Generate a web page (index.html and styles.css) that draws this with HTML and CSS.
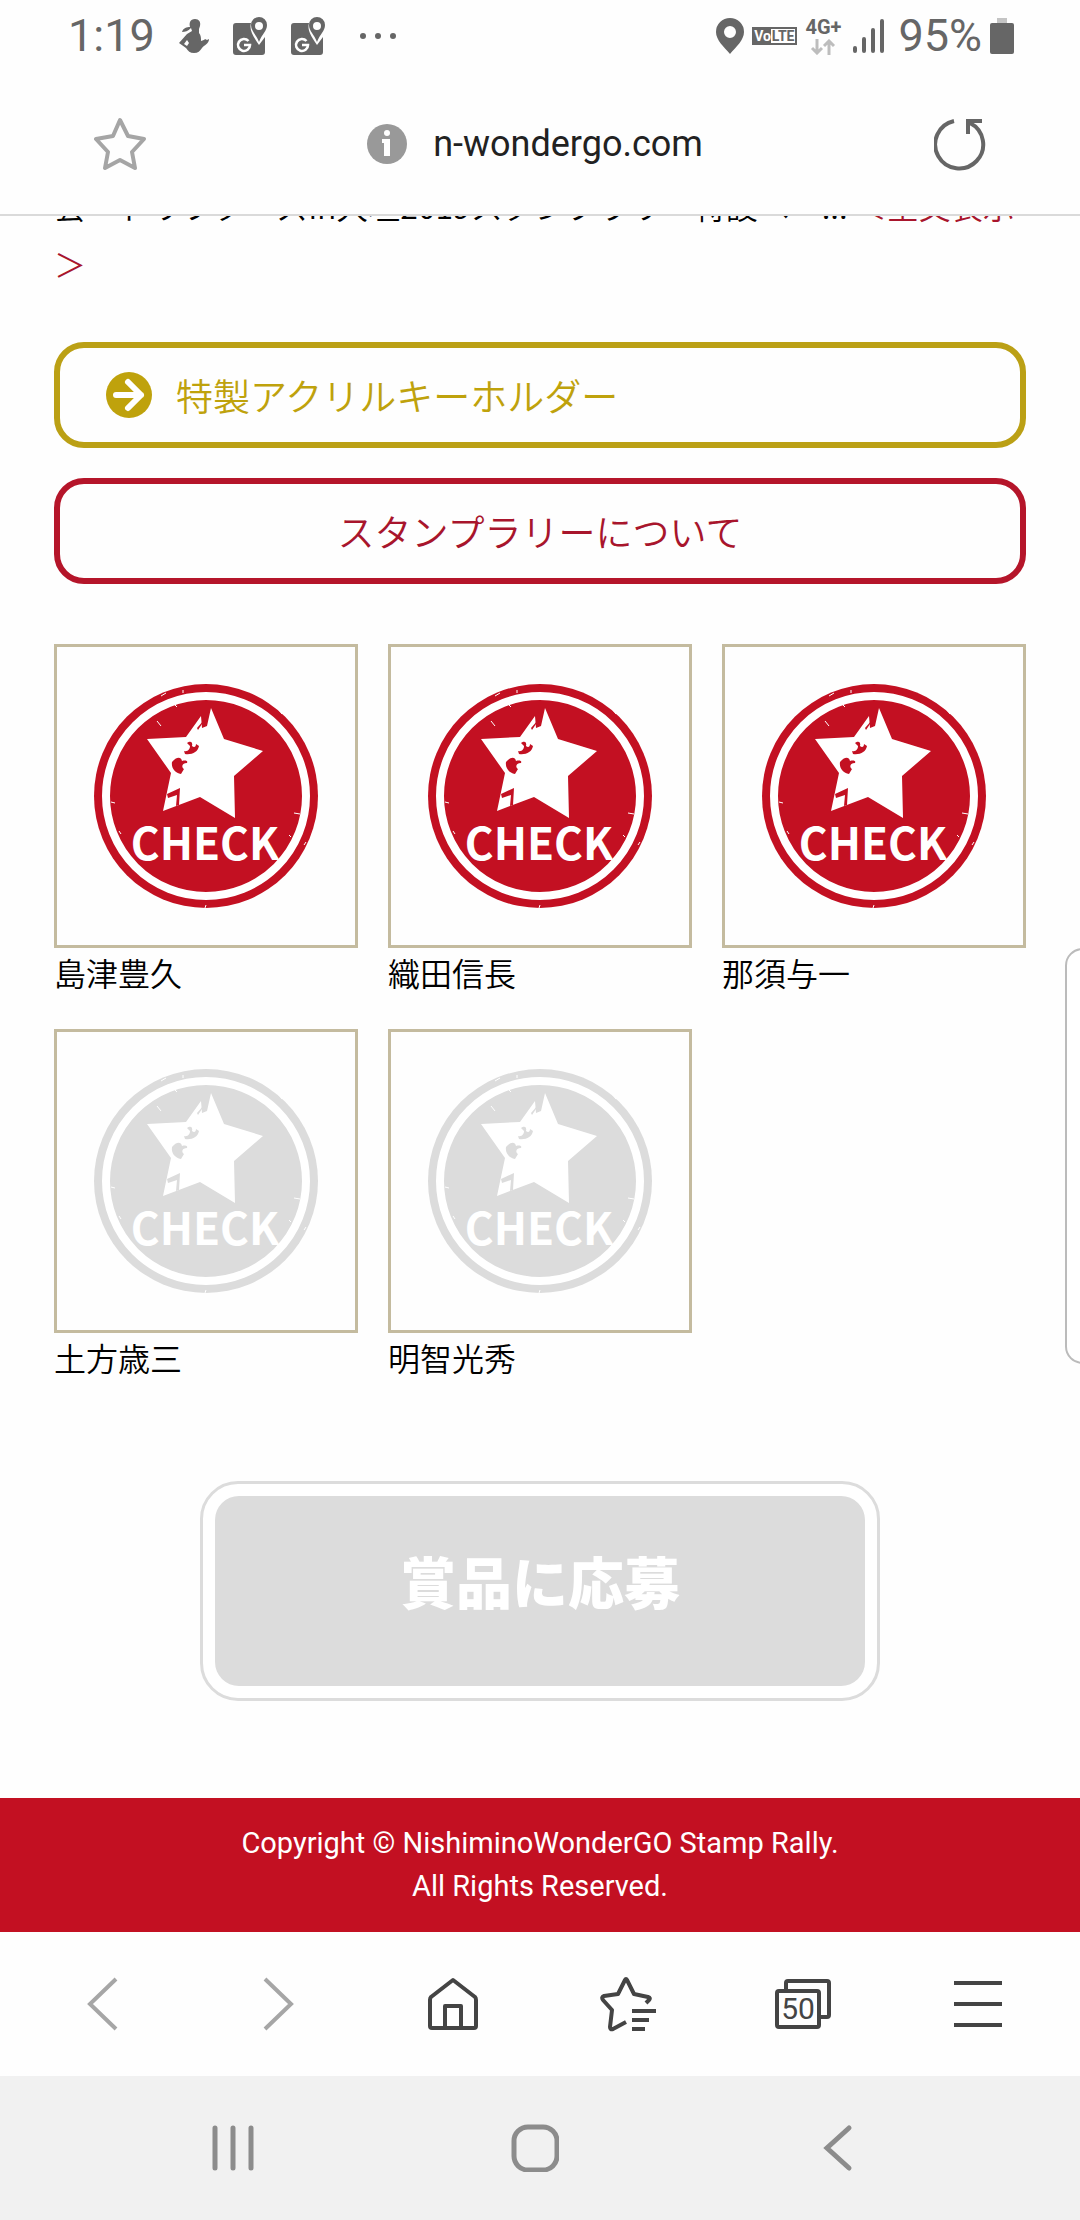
FILE: index.html
```html
<!DOCTYPE html>
<html lang="ja">
<head>
    <meta charset="UTF-8">
    <meta name="viewport" content="width=device-width, initial-scale=1.0">
    <title>スタンプラリー</title>
    <link rel="stylesheet" href="styles.css">
</head>
<body>
    <!-- shared drawings -->
    <svg class="defs" aria-hidden="true">
        <symbol id="icon-gmap" viewBox="0 0 34 38">
            <path fill="currentColor" d="M3 6h15c-2 7 2 13 8 22l6-8v15a3 3 0 0 1-3 3H3a3 3 0 0 1-3-3V9a3 3 0 0 1 3-3z"/>
            <path fill="currentColor" fill-rule="evenodd" d="M26 0a8 8 0 0 1 8 8c0 6-5 9-8 17-3-8-8-11-8-17a8 8 0 0 1 8-8zm0 5a4 4 0 1 0 0 8 4 4 0 0 0 0-8z"/>
            <path fill="none" stroke="#fff" stroke-width="2.6" d="M15.500 24a6 6 0 1 0 1.500 4h-6"/>
        </symbol>
        <symbol id="stamp" viewBox="3 3 298 298">
            <circle cx="152" cy="152" r="112" fill="currentColor"/>
            <circle cx="152" cy="152" r="100" fill="none" stroke="#fff" stroke-width="8"/>
            <path fill="#fff" d="M157 64l13 31 39 12-29 25 1 42-35-21-37 14 8-38-24-34 39-2 15-21 1 12 5-2z"/>
            <g fill="currentColor">
                <path d="M118 118c4-5 9-6 10-1 4-1 6 0 5 2-5 0-6 4-3 6l-3 5c-6-1-10-6-9-12z"/>
                <path d="M133 99c4-3 6 0 5 3 2 2 4 1 4-2l3 2c-1 6-7 9-14 8l-1-3c4 1 6-2 6-5z"/>
                <path d="M113 150l13-6-1 17-3 1 1-11-9 3z"/>
                <path d="M143 84l7-8 1 7-3-3-4 6z"/>
            </g>
            <text class="stamp-text" x="151" y="216" text-anchor="middle" fill="#fff">CHECK</text>
            <!-- scratches in the ink -->
            <path fill="none" stroke="#fff" stroke-width="1" d="M107 52l5-3M129 46v3M103 77l4 5M60 87l2-3M225 66l3 4M57 158l4 1M240 169l6 1M65 187l2 3M250 201l2-3M235 191l2 2M151 264l1-3M121 61l2 2"/>
        </symbol>
    </svg>

    <header class="top">
        <div class="status">
            <div class="status-left">
                <span class="clock">1:19</span>
                <svg width="30" height="34" viewBox="0 0 30 34" fill="currentColor">
                    <path fill-rule="evenodd" d="M16 0c4 0 6 3 5 7l-1 3v4c2 2 2 5 2 8 2-1 4-1 4-2l2 1 2-1c0 5-5 6-7 9-2 3-4 5-8 5-4 0-6-2-8-5l-7-5 8-9 5-3-1-3c-3 3-6 4-9 4 1-4 5-5 8-5-1-4 0-8 5-8zM8 21l-3 4 3 2 2-3z"/>
                </svg>
                <svg width="34" height="38"><use href="#icon-gmap"/></svg>
                <svg width="34" height="38"><use href="#icon-gmap"/></svg>
                <svg class="more" width="38" height="8" viewBox="0 0 38 8" fill="currentColor">
                    <circle cx="4" cy="4" r="3"/><circle cx="19" cy="4" r="3"/><circle cx="34" cy="4" r="3"/>
                </svg>
            </div>
            <div class="status-right">
                <svg width="28" height="36" viewBox="0 0 28 36">
                    <path fill="currentColor" fill-rule="evenodd" d="M14 0a14 14 0 0 1 14 14c0 8-8 15-14 22C8 29 0 22 0 14A14 14 0 0 1 14 0zm0 8a6 6 0 1 0 0 12 6 6 0 0 0 0-12z"/>
                </svg>
                <span class="volte"><b>Vo</b><b class="lte">LTE</b></span>
                <span class="network">4G+
                    <svg width="26" height="16" viewBox="0 0 26 16" fill="none" stroke="#bdbdbd" stroke-width="3">
                        <path d="M7 0v14M2 9l5 5 5-5M19 16V2M14 7l5-5 5 5"/>
                    </svg>
                </span>
                <svg class="signal" width="31" height="34" viewBox="0 0 31 34" stroke="currentColor" stroke-width="4" stroke-linecap="round">
                    <path d="M2 29v3M11 20v12M20 11v21M29 2v30"/>
                </svg>
                <span class="clock">95%</span>
                <svg width="24" height="36" viewBox="0 0 24 36">
                    <path fill="#c4c4c4" d="M7 0h10v6H7z"/>
                    <rect y="5" width="24" height="31" rx="2" fill="currentColor"/>
                </svg>
            </div>
        </div>
        <div class="address">
            <button class="icon-btn light" aria-label="ブックマーク">
                <svg width="52" height="54" viewBox="0 0 52 54" fill="none" stroke="currentColor" stroke-width="4" stroke-linejoin="round">
                    <path d="M26 3l8 16 16 3-12 13 3 16-15-8-15 8 3-16L2 22l17-3z"/>
                </svg>
            </button>
            <div class="url">
                <svg width="40" height="40" viewBox="0 0 40 40">
                    <circle cx="20" cy="20" r="20" fill="#999"/>
                    <path fill="#fff" d="M15 15h8v17h-6V19h-2z"/>
                    <circle cx="20" cy="9" r="3" fill="#fff"/>
                </svg>
                <span>n-wondergo.com</span>
            </div>
            <button class="icon-btn" aria-label="再読み込み">
                <svg width="52" height="54" viewBox="0 0 52 54" fill="none" stroke="currentColor" stroke-width="4">
                    <path d="M20 4A24 24 0 1 0 36 6M34 17V4h14"/>
                </svg>
            </button>
        </div>
    </header>

    <main class="page">
        <p class="intro">会「ドリフターズin大垣2019スタンプラリー特設ペー... <a href="#">＜全文表示<br>＞</a></p>

        <a class="link-box gold" href="#">
            <svg width="46" height="46" viewBox="0 0 46 46">
                <circle cx="23" cy="23" r="23" fill="currentColor"/>
                <path fill="none" stroke="#fff" stroke-width="6" stroke-linecap="round" stroke-linejoin="round" d="M10 23h25M22 10l13 13-13 13"/>
            </svg>
            特製アクリルキーホルダー
        </a>
        <a class="link-box red" href="#">スタンプラリーについて</a>

        <div class="stamps">
            <figure class="stamp done">
                <svg class="stamp-img"><use href="#stamp"/></svg>
                <figcaption>島津豊久</figcaption>
            </figure>
            <figure class="stamp done">
                <svg class="stamp-img"><use href="#stamp"/></svg>
                <figcaption>織田信長</figcaption>
            </figure>
            <figure class="stamp done">
                <svg class="stamp-img"><use href="#stamp"/></svg>
                <figcaption>那須与一</figcaption>
            </figure>
            <figure class="stamp">
                <svg class="stamp-img"><use href="#stamp"/></svg>
                <figcaption>土方歳三</figcaption>
            </figure>
            <figure class="stamp">
                <svg class="stamp-img"><use href="#stamp"/></svg>
                <figcaption>明智光秀</figcaption>
            </figure>
        </div>

        <button class="apply-btn" disabled><span>賞品に応募</span></button>
    </main>

    <footer class="copyright">
        Copyright © NishiminoWonderGO Stamp Rally.<br>
        All Rights Reserved.
    </footer>

    <nav class="toolbar">
        <button class="icon-btn pale" aria-label="戻る">
            <svg width="52" height="54" viewBox="0 0 52 54" fill="none" stroke="currentColor" stroke-width="4">
                <path d="M39 2L13 27l26 25"/>
            </svg>
        </button>
        <button class="icon-btn pale" aria-label="進む">
            <svg width="52" height="54" viewBox="0 0 52 54" fill="none" stroke="currentColor" stroke-width="4">
                <path d="M13 2l26 25-26 25"/>
            </svg>
        </button>
        <button class="icon-btn dark" aria-label="ホーム">
            <svg width="52" height="54" viewBox="0 0 52 54" fill="none" stroke="currentColor" stroke-width="4" stroke-linejoin="round">
                <path d="M26 3l22 17q1 1 1 3v26q0 2-2 2H5q-2 0-2-2V23q0-2 1-3zM18 51V29h16v22"/>
            </svg>
        </button>
        <button class="icon-btn dark" aria-label="ブックマーク一覧">
            <svg width="56" height="56" viewBox="0 0 56 56" fill="none" stroke="currentColor" stroke-width="4" stroke-linejoin="round">
                <path d="M26 46l-13 7q-3 1-3-2l2-17-9-10q-2-3 1-4l14-2 7-14q1-2 2 0l7 14 14 3q3 1 1 3l-3 3"/>
                <path d="M32 35h24M32 44h17M32 53h13"/>
            </svg>
        </button>
        <button class="icon-btn dark" aria-label="タブ">
            <svg width="56" height="50" viewBox="0 0 56 50" fill="none" stroke="currentColor" stroke-width="4">
                <path d="M11 11V4q0-2 2-2h39q2 0 2 2v32q0 2-2 2h-8"/>
                <rect x="2" y="12" width="42" height="36" rx="2"/>
                <text class="tab-count" x="23" y="40" text-anchor="middle">50</text>
            </svg>
        </button>
        <button class="icon-btn dark" aria-label="メニュー">
            <svg width="48" height="48" viewBox="0 0 48 48" stroke="currentColor" stroke-width="4">
                <path d="M0 3h48M0 24h48M0 45h48"/>
            </svg>
        </button>
    </nav>

    <nav class="system-nav">
        <button class="icon-btn soft" aria-label="履歴">
            <svg width="48" height="48" viewBox="0 0 48 48" stroke="currentColor" stroke-width="5" stroke-linecap="round">
                <path d="M6 4v40M24 4v40M42 4v40"/>
            </svg>
        </button>
        <button class="icon-btn soft" aria-label="ホーム画面">
            <svg width="48" height="48" viewBox="0 0 48 48" fill="none" stroke="currentColor" stroke-width="5">
                <rect x="3" y="3" width="43" height="43" rx="14"/>
            </svg>
        </button>
        <button class="icon-btn soft" aria-label="戻る">
            <svg width="48" height="48" viewBox="0 0 48 48" fill="none" stroke="currentColor" stroke-width="5" stroke-linecap="round">
                <path d="M36 4L14 24l22 20"/>
            </svg>
        </button>
    </nav>

    <div class="edge-panel"></div>
</body>
</html>
```

FILE: styles.css
```css
* {
    box-sizing: border-box;
}

body {
    position: relative;
    display: flex;
    flex-direction: column;
    min-height: 100vh;
    margin: 0;
    overflow-x: hidden;
    background: #fefefe;
    color: #000;
    font-family: Roboto, "Noto Sans CJK JP", sans-serif;
}

svg {
    display: block;
    flex: none;
}

.defs {
    position: absolute;
    width: 0;
    height: 0;
}

.icon-btn {
    display: flex;
    align-items: center;
    justify-content: center;
    padding: 0;
    border: none;
    background: none;
    color: #666;
}

.icon-btn.light { color: #a5a5a5; }
.icon-btn.pale { color: #a6a6a6; }
.icon-btn.dark { color: #444; }
.icon-btn.soft { color: #8c8c8c; }

/* status bar and address bar */
.top {
    border-bottom: 2px solid #dadada;
}

.status {
    display: flex;
    justify-content: space-between;
    height: 72px;
    padding: 0 66px 0 68px;
    color: #666;
}

.status-left,
.status-right {
    display: flex;
    align-items: center;
}

.status-left {
    gap: 24px;
}

.status-right {
    gap: 8px;
}

.clock {
    font-size: 45px;
    line-height: 72px;
}

.status-right .clock {
    margin-left: 6px;
}

.more {
    margin-left: 10px;
}

.volte {
    display: flex;
    padding: 2px;
    background: #666;
    color: #fff;
    font-size: 14px;
    line-height: 14px;
}

.volte .lte {
    padding: 0 1px;
    background: #fff;
    color: #666;
}

.network {
    display: flex;
    flex-direction: column;
    align-items: center;
    gap: 2px;
    font-size: 20px;
    font-weight: bold;
    line-height: 20px;
}

.signal {
    margin-left: 4px;
}

.address {
    display: flex;
    align-items: center;
    justify-content: space-between;
    height: 142px;
    padding: 2px 94px 0;
}

.url {
    display: flex;
    align-items: center;
    gap: 26px;
    padding-right: 10px;
    color: #222;
    font-size: 36px;
    line-height: 42px;
}

/* page content */
.page {
    flex: 1;
    padding: 0 54px;
    overflow: hidden;
    font-family: "Noto Sans CJK JP", sans-serif;
    font-weight: 350;
}

.intro {
    margin: -40px 0 50px;
    font-size: 32px;
    line-height: 58px;
}

.intro a {
    color: #a8152c;
    text-decoration: none;
}

.link-box {
    display: flex;
    align-items: center;
    justify-content: center;
    margin-bottom: 30px;
    padding: 24px 46px;
    border: 6px solid;
    border-radius: 30px;
    font-size: 37px;
    line-height: 46px;
    text-decoration: none;
}

.link-box.gold {
    justify-content: flex-start;
    gap: 24px;
    border-color: #bba015;
    color: #bfa20c;
}

.link-box.red {
    border-color: #b5152a;
    color: #a8152c;
}

.stamps {
    display: grid;
    grid-template-columns: repeat(3, 1fr);
    gap: 33px 30px;
    margin-top: 60px;
}

.stamp {
    margin: 0;
    color: #dcdcdc;
}

.stamp.done {
    color: #c31022;
}

.stamp-img {
    width: 100%;
    height: auto;
    aspect-ratio: 1;
    border: 3px solid #c4bb9f;
}

.stamp-text {
    font-family: "Noto Sans CJK JP", sans-serif;
    font-size: 44px;
    font-weight: bold;
}

.stamp figcaption {
    color: #000;
    font-size: 32px;
    line-height: 48px;
}

.apply-btn {
    display: block;
    width: 70%;
    margin: 100px auto 97px;
    padding: 12px;
    border: 3px solid #dcdcdc;
    border-radius: 38px;
    background: #fff;
    color: #fff;
    font-family: "Noto Sans CJK JP", sans-serif;
    font-size: 56px;
    font-weight: 900;
    line-height: 60px;
}

.apply-btn span {
    display: block;
    padding: 54px 0 76px;
    border-radius: 24px;
    background: #dcdcdc;
}

.copyright {
    padding: 24px;
    background: #c31022;
    color: #fff;
    font-size: 29px;
    line-height: 43px;
    text-align: center;
}

/* browser toolbar */
.toolbar {
    display: grid;
    grid-template-columns: repeat(6, 1fr);
    height: 144px;
    padding: 0 15px;
}

.tab-count {
    fill: #444;
    stroke: none;
    font-family: Roboto, sans-serif;
    font-size: 30px;
}

/* phone navigation keys */
.system-nav {
    display: grid;
    grid-template-columns: repeat(3, 1fr);
    height: 144px;
    padding: 0 92px 0 82px;
    background: #f1f1f1;
}

.edge-panel {
    position: absolute;
    top: 948px;
    right: -20px;
    width: 35px;
    height: 416px;
    border: 2px solid #bbb;
    border-radius: 20px;
    background: #fff;
}
```
